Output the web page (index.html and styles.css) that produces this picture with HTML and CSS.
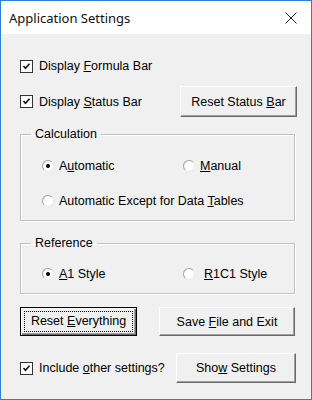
FILE: index.html
```html
<!DOCTYPE html>
<html lang="en">
<head>
  <meta charset="UTF-8">
  <title>Application Settings</title>
  <link rel="stylesheet" href="styles.css">
</head>
<body>
  <div class="window">
    <div class="titlebar">
      <span class="title">Application Settings</span>
      <svg class="close" width="12" height="12" viewBox="0 0 12 12">
        <path d="M0.5 0.5 L11.5 11.5 M11.5 0.5 L0.5 11.5" stroke="#222" stroke-width="1" fill="none"/>
      </svg>
    </div>

    <div class="client">
      <div class="row first">
        <label class="check">
          <span class="box"><svg width="11" height="11" viewBox="0 0 11 11"><path d="M2.5 5 L4.5 7.2 L8.5 2.8" stroke="#111" stroke-width="1.6" fill="none"/></svg></span>
          <span>Display <u>F</u>ormula Bar</span>
        </label>
      </div>

      <div class="row second">
        <label class="check">
          <span class="box"><svg width="11" height="11" viewBox="0 0 11 11"><path d="M2.5 5 L4.5 7.2 L8.5 2.8" stroke="#111" stroke-width="1.6" fill="none"/></svg></span>
          <span>Display <u>S</u>tatus Bar</span>
        </label>
        <button class="btn status">Reset Status <u>B</u>ar</button>
      </div>

      <fieldset class="group calc">
        <legend>Calculation</legend>
        <div class="radios">
          <label class="radio"><span class="dot on"></span><span>A<u>u</u>tomatic</span></label>
          <label class="radio"><span class="dot"></span><span><u>M</u>anual</span></label>
        </div>
        <div class="radios lower">
          <label class="radio"><span class="dot"></span><span>Automatic Except for Data <u>T</u>ables</span></label>
        </div>
      </fieldset>

      <fieldset class="group ref">
        <legend>Reference</legend>
        <div class="radios">
          <label class="radio"><span class="dot on"></span><span><u>A</u>1 Style</span></label>
          <label class="radio wide"><span class="dot"></span><span><u>R</u>1C1 Style</span></label>
        </div>
      </fieldset>

      <div class="row actions">
        <button class="btn default"><span class="focus">Reset <u>E</u>verything</span></button>
        <button class="btn save">Save <u>F</u>ile and Exit</button>
      </div>

      <div class="row last">
        <label class="check">
          <span class="box"><svg width="11" height="11" viewBox="0 0 11 11"><path d="M2.5 5 L4.5 7.2 L8.5 2.8" stroke="#111" stroke-width="1.6" fill="none"/></svg></span>
          <span>Include <u>o</u>ther settings?</span>
        </label>
        <button class="btn show">Sho<u>w</u> Settings</button>
      </div>
    </div>
  </div>
</body>
</html>
```

FILE: styles.css
```css
body {
  margin: 0;
  font-family: "Liberation Sans", Arial, sans-serif;
  font-size: 12.5px;
  color: #000;
  background: #fff;
}
.window {
  width: 312px;
  height: 400px;
  box-sizing: border-box;
  border: 1px solid #2b7fd4;
  display: flex;
  flex-direction: column;
}
.titlebar {
  height: 33px;
  background: #fff;
  display: flex;
  align-items: center;
  justify-content: space-between;
  padding: 0 14px 0 8px;
}
.title {
  font-family: "Noto Sans", sans-serif;
  font-size: 13px;
  color: #111;
}
.client {
  flex: 1;
  background: #f0f0f0;
  padding: 0 16px 0 19px;
}
.row {
  display: flex;
  align-items: center;
  justify-content: space-between;
}
.row.first {
  height: 20px;
  margin-top: 22px;
}
.row.second {
  height: 31px;
  margin-top: 10px;
}
.check {
  display: flex;
  align-items: center;
  gap: 6px;
  white-space: nowrap;
}
.box {
  flex-shrink: 0;
  width: 11px;
  height: 11px;
  border: 1px solid #333;
  background: #fff;
  display: flex;
}
.btn {
  font-family: inherit;
  font-size: 12.5px;
  color: #000;
  background: #f0f0f0;
  border: 1px solid;
  border-color: #fff #696969 #696969 #fff;
  box-shadow: inset -1px -1px #a0a0a0;
  padding: 0;
  border-radius: 0;
  white-space: nowrap;
}
.btn.status {
  width: 117px;
  height: 31px;
  margin-right: -2px;
}
.group {
  margin: 0;
  border: 1px solid #c0c0c0;
  box-shadow: 1px 1px #fff, inset 1px 1px #fff;
  padding: 0;
}
.group legend {
  padding: 0 4px;
  margin-left: 10px;
  line-height: 16px;
}
.calc {
  margin-top: 9px;
  padding-top: 14px;
  padding-bottom: 9px;
}
.ref {
  margin-top: 14px;
  padding-top: 13px;
  padding-bottom: 9px;
}
.radios {
  display: grid;
  grid-template-columns: 141px 1fr;
  height: 20px;
  align-items: center;
  padding-left: 21px;
}
.radios.lower {
  margin-top: 15px;
}
.radio {
  display: flex;
  align-items: center;
  gap: 5px;
  white-space: nowrap;
}
.radio.wide {
  gap: 9px;
}
.dot {
  flex-shrink: 0;
  width: 10px;
  height: 10px;
  border-radius: 50%;
  background: #fff;
  border: 1px solid;
  border-color: #a0a0a0 #e8e8e8 #e8e8e8 #a0a0a0;
  display: flex;
  align-items: center;
  justify-content: center;
}
.dot.on::after {
  content: "";
  width: 4px;
  height: 4px;
  border-radius: 50%;
  background: #000;
}
.row.actions {
  margin-top: 13px;
  height: 29px;
}
.btn.default {
  width: 117px;
  height: 29px;
  border: 1px solid #000;
  box-shadow: inset 1px 1px #fff, inset -1px -1px #696969, inset -2px -2px #a0a0a0;
  padding: 3px;
}
.focus {
  display: block;
  height: 100%;
  line-height: 19px;
  box-sizing: border-box;
  border: 1px dotted #000;
}
.btn.save {
  width: 136px;
  height: 29px;
}
.row.last {
  margin-top: 17px;
  height: 30px;
}
.btn.show {
  width: 120px;
  height: 30px;
  margin-right: -1px;
}
```
